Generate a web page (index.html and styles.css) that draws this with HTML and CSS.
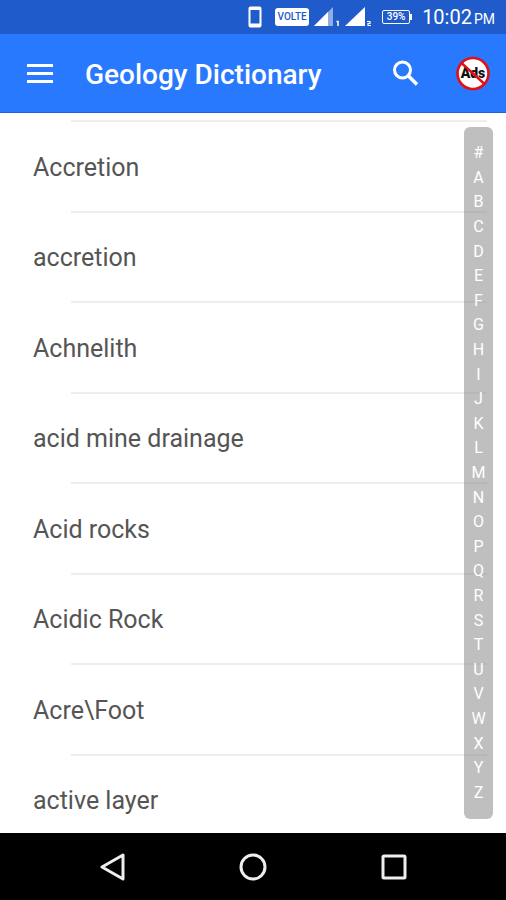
FILE: index.html
```html
<!DOCTYPE html>
<html lang="en">
<head>
<meta charset="utf-8">
<meta name="viewport" content="width=device-width, initial-scale=1">
<title>Geology Dictionary</title>
<link rel="stylesheet" href="styles.css">
</head>
<body>
<div class="status">
  <svg class="status-phone" width="16" height="24" viewBox="0 0 16 24" aria-hidden="true"><rect x="2.500" y="2.500" width="11" height="19" rx="1" fill="none" stroke="#fff" stroke-width="2"/><path d="M2 3.500h12M2 20h12" stroke="#fff" stroke-width="3"/></svg>
  <span class="volte">VOLTE</span>
  <svg class="status-signal" width="26" height="20" viewBox="0 0 26 20" aria-hidden="true"><path d="M0 19L19 0V19z" fill="#fff" opacity=".5"/><path d="M0 19L14 5V19z" fill="#fff"/><path d="M22.500 14.500h1.500V19" fill="none" stroke="#fff" stroke-width="1.500"/></svg>
  <svg class="status-signal" width="28" height="20" viewBox="0 0 28 20" aria-hidden="true"><path d="M0 19L20 0V19z" fill="#fff"/><path d="M22 14.500h3v2h-2v2h3" fill="none" stroke="#fff" stroke-width="1.200"/></svg>
  <span class="battery">39%</span>
  <span class="clock"><span>10:02</span><small>PM</small></span>
</div>
<header class="appbar">
  <button class="icon-button" type="button" aria-label="Open menu">
    <svg width="28" height="24" viewBox="0 0 28 24"><path d="M1 4.500h26M1 12.500h26M1 20.500h26" stroke="#fff" stroke-width="3"/></svg>
  </button>
  <h1>Geology Dictionary</h1>
  <button class="icon-button" type="button" aria-label="Search">
    <svg width="28" height="28" viewBox="0 0 28 28" fill="none" stroke="#fff"><circle cx="10.500" cy="11" r="8" stroke-width="3"/><path d="M16.500 17L25 25.500" stroke-width="3.600"/></svg>
  </button>
  <button class="icon-button ads" type="button" aria-label="Remove Ads">
    <svg width="34" height="36" viewBox="0 0 34 36"><circle cx="17" cy="18.500" r="15.500" fill="#fff" stroke="#e01018" stroke-width="2.600"/><text x="17" y="23" text-anchor="middle" class="ads-text">Ads</text><path d="M6 8.500L28 28.500" stroke="#e01018" stroke-width="2.400"/></svg>
  </button>
</header>
<main>
  <ul class="words">
    <li>Accretion</li>
    <li>accretion</li>
    <li>Achnelith</li>
    <li>acid mine drainage</li>
    <li>Acid rocks</li>
    <li>Acidic Rock</li>
    <li>Acre\Foot</li>
    <li>active layer</li>
  </ul>
  <nav class="index" aria-label="Alphabet">
    <a href="#">#</a><a href="#">A</a><a href="#">B</a><a href="#">C</a><a href="#">D</a><a href="#">E</a><a href="#">F</a><a href="#">G</a><a href="#">H</a><a href="#">I</a><a href="#">J</a><a href="#">K</a><a href="#">L</a><a href="#">M</a><a href="#">N</a><a href="#">O</a><a href="#">P</a><a href="#">Q</a><a href="#">R</a><a href="#">S</a><a href="#">T</a><a href="#">U</a><a href="#">V</a><a href="#">W</a><a href="#">X</a><a href="#">Y</a><a href="#">Z</a>
  </nav>
</main>
<footer class="navbar">
  <button type="button" aria-label="Back"><svg width="28" height="28" viewBox="0 0 28 28"><path d="M4 14L25 2V26z"/></svg></button>
  <button type="button" aria-label="Home"><svg width="28" height="28" viewBox="0 0 28 28"><circle cx="14" cy="14" r="12"/></svg></button>
  <button type="button" aria-label="Recent apps"><svg width="28" height="28" viewBox="0 0 28 28"><rect x="3" y="3" width="22" height="22" rx="1"/></svg></button>
</footer>
</body>
</html>
```
FILE: styles.css
```css
* {
  box-sizing: border-box;
}

body {
  margin: 0;
  height: 100vh;
  display: flex;
  flex-direction: column;
  font-family: Roboto, "Liberation Sans", sans-serif;
  background: #fff;
  color: #555;
}

button {
  padding: 0;
  border: 0;
  background: none;
  cursor: pointer;
}

svg {
  display: block;
}

.status {
  flex: 0 0 34px;
  display: flex;
  align-items: center;
  justify-content: flex-end;
  padding-right: 11px;
  background: #205bcb;
  color: #fff;
}

.volte {
  margin: 0 5px 0 12px;
  width: 34px;
  border-radius: 3px;
  background: #fff;
  color: #205bcb;
  font-size: 10px;
  font-weight: 500;
  line-height: 18px;
  text-align: center;
}

.status-signal {
  margin-right: 5px;
}

.battery {
  position: relative;
  margin: 0 12px 0 4px;
  width: 28px;
  border: 1px solid #fff;
  border-radius: 2px;
  font-size: 10px;
  font-weight: 500;
  line-height: 12px;
  text-align: center;
}

.battery::after {
  content: "";
  position: absolute;
  top: 3px;
  right: -3px;
  width: 2px;
  height: 6px;
  background: #fff;
}

.clock {
  display: flex;
  align-items: baseline;
  gap: 2px;
  padding-top: 2px;
  font-size: 20px;
  line-height: 24px;
}

.clock small {
  font-size: 14px;
}

.appbar {
  flex: 0 0 79px;
  display: flex;
  align-items: center;
  padding: 0 16px 0 26px;
  background: #2979ff;
  border-bottom: 1px solid #1f62dc;
  color: #fff;
}

h1 {
  flex: 1;
  margin: 0 0 0 31px;
  padding-top: 3px;
  font-size: 28px;
  font-weight: 500;
  line-height: 32px;
}

.ads {
  margin-left: 36px;
}

.ads-text {
  font: 900 14px Roboto, sans-serif;
  fill: #111;
}

main {
  flex: 1;
  min-height: 0;
  position: relative;
  display: flex;
  padding-top: 7px;
  overflow: hidden;
}

.words {
  flex: 1;
  display: grid;
  grid-auto-rows: 1fr;
  margin: 0 19px -11px 0;
  padding: 0;
  list-style: none;
}

.words li {
  display: flex;
  align-items: center;
  padding: 5px 0 0 33px;
  background: linear-gradient(#eee, #eee) 71px 0 / 100% 2px no-repeat;
  font-size: 25px;
  line-height: 32px;
}

.index {
  position: absolute;
  top: 14px;
  right: 13px;
  bottom: 14px;
  width: 29px;
  display: flex;
  flex-direction: column;
  padding: 14px 0;
  border-radius: 6px;
  background: rgba(128, 128, 128, 0.5);
}

.index a {
  flex: 1;
  display: flex;
  align-items: center;
  justify-content: center;
  color: #fff;
  font-size: 16px;
  line-height: 24px;
  text-decoration: none;
}

.navbar {
  flex: 0 0 67px;
  display: flex;
  align-items: center;
  justify-content: center;
  gap: 113px;
  background: #000;
}

.navbar svg {
  fill: none;
  stroke: #eee;
  stroke-width: 3;
  stroke-linejoin: round;
}
```
